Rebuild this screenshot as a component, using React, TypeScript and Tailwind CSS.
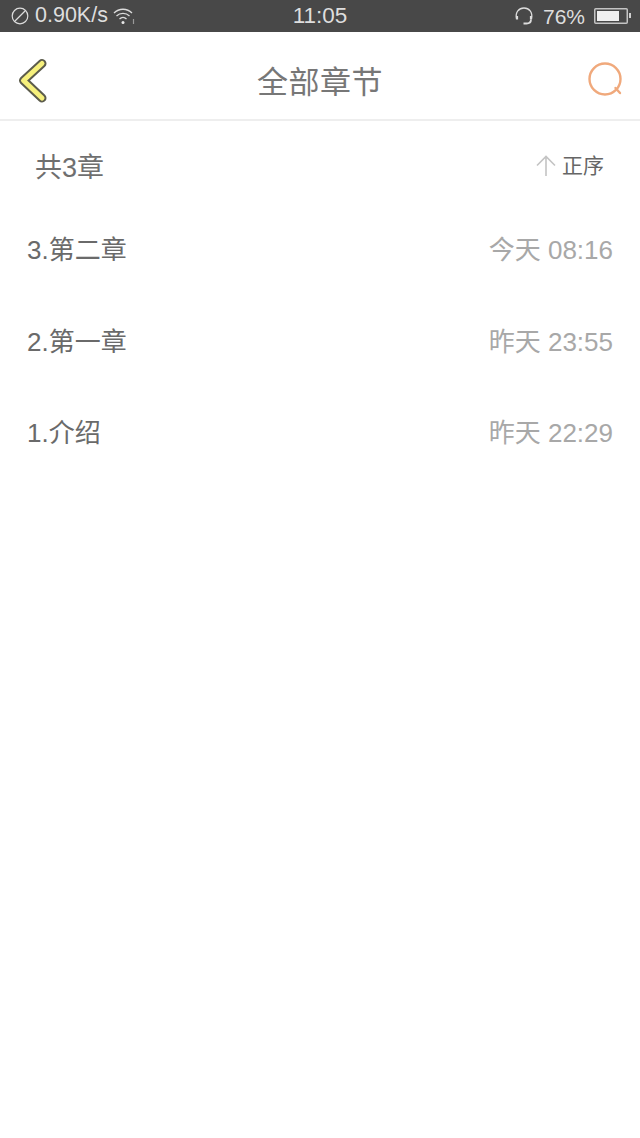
const FONT = "font-['Liberation_Sans','Noto_Sans_CJK_SC',sans-serif]";

const rows = [
  ["3.第二章", "今天 08:16"],
  ["2.第一章", "昨天 23:55"],
  ["1.介绍", "昨天 22:29"],
];

function StatusBar() {
  return (
    <div className="flex h-8 items-center bg-[#484848] text-[#dedede]">
      <div className="flex w-[200px] items-center pl-[11px]">
        <svg width="18" height="18" viewBox="0 0 18 18" fill="none" stroke="#dcdcdc" strokeWidth="1.2">
          <circle cx="9" cy="9" r="7.8" />
          <path d="M4 14 14 4" />
        </svg>
        <span className="ml-[6px] text-[21.5px] leading-none">0.90K/s</span>
        <svg className="ml-[5px]" width="22" height="18" viewBox="0 0 22 18" fill="none" stroke="#dcdcdc" strokeWidth="1.3">
          <path d="M1 6C6 1 14 1 19 6" />
          <path d="M3.500 9C7 5.500 13 5.500 16.500 9" />
          <path d="M6.500 12C8.500 10 11.500 10 13.500 12" />
          <circle cx="10" cy="15.500" r="1.500" fill="#e8e8e8" stroke="none" />
          <path d="M20.500 12v5" stroke="#999" strokeWidth="1.200" />
        </svg>
      </div>
      <div className="flex-1 text-center text-[22.5px] leading-none">11:05</div>
      <div className="flex w-[200px] items-center justify-end pr-[9px]">
        <svg width="20" height="20" viewBox="0 0 20 20" fill="none" stroke="#dcdcdc" strokeWidth="1.3">
          <path d="M2.500 12.500C1 6 5 2 10 2s9 4 7.500 10.500" />
          <path d="M3 10v3.500M17 10v3.500" strokeWidth="2.200" />
          <path d="M17 13.500c0 2.500-2 4-4.500 4h-3" strokeWidth="1.800" />
        </svg>
        <span className="ml-[9px] text-[21px] leading-none">76%</span>
        <svg className="ml-[9px]" width="37" height="18" viewBox="0 0 37 18" fill="none">
          <rect x="0.750" y="1.750" width="32.500" height="14.500" rx="1" stroke="#c4c4c4" strokeWidth="1.500" />
          <rect x="3" y="4" width="22" height="10" fill="#f0f0f0" />
          <rect x="35" y="6" width="2" height="5" fill="#cfcfcf" />
        </svg>
      </div>
    </div>
  );
}

function NavBar() {
  return (
    <div className="flex h-[89px] items-center justify-between border-b-2 border-[#eeeeee] bg-white pl-[18px] pr-[17px]">
      <svg className="mt-[10px]" width="30" height="46" viewBox="0 0 30 46" fill="none" strokeLinecap="round" strokeLinejoin="round">
        <path d="M24 5.500 5.500 22.500 24 40" stroke="#5c5c4c" strokeWidth="9" />
        <path d="M24 5.500 5.500 22.500 24 40" stroke="#f6f07c" strokeWidth="5" />
      </svg>
      <div className="ml-[5px] mt-[14px] text-[31px] leading-none tracking-[0.5px] text-[#777777]">全部章节</div>
      <svg className="mt-[8px]" width="36" height="36" viewBox="0 0 36 36" fill="none" stroke="#f0a97c" strokeWidth="2.400" strokeLinecap="round">
        <circle cx="18" cy="17" r="15.500" />
        <path d="M28.500 26 33 31" />
      </svg>
    </div>
  );
}

export default function App() {
  return (
    <div className={`${FONT} h-[1138px] w-[640px] overflow-hidden bg-white`}>
      <StatusBar />
      <NavBar />
      <div className="flex h-[83.500px] items-center justify-between pl-[35px] pr-9 pt-[8px]">
        <span className="mt-[3px] text-[27px] leading-none text-[#6f6f6f]">共3章</span>
        <div className="mb-[2px] flex items-center">
          <svg width="20" height="21" viewBox="0 0 20 21" fill="none" stroke="#c4c4c4" strokeWidth="1.600">
            <path d="M10 21V1.500M1 10.500 10 1.500l9 9" />
          </svg>
          <span className="ml-[6px] text-[21px] leading-none text-[#666666]">正序</span>
        </div>
      </div>
      <div className="pl-[27px] pr-[27px]">
        {rows.map(([title, time]) => (
          <div key={title} className="flex h-[91.500px] items-center justify-between">
            <span className="text-[26px] leading-none text-[#6a6a6a]">{title}</span>
            <span className="text-[26px] leading-none text-[#a8a8a8]">{time}</span>
          </div>
        ))}
      </div>
    </div>
  );
}
